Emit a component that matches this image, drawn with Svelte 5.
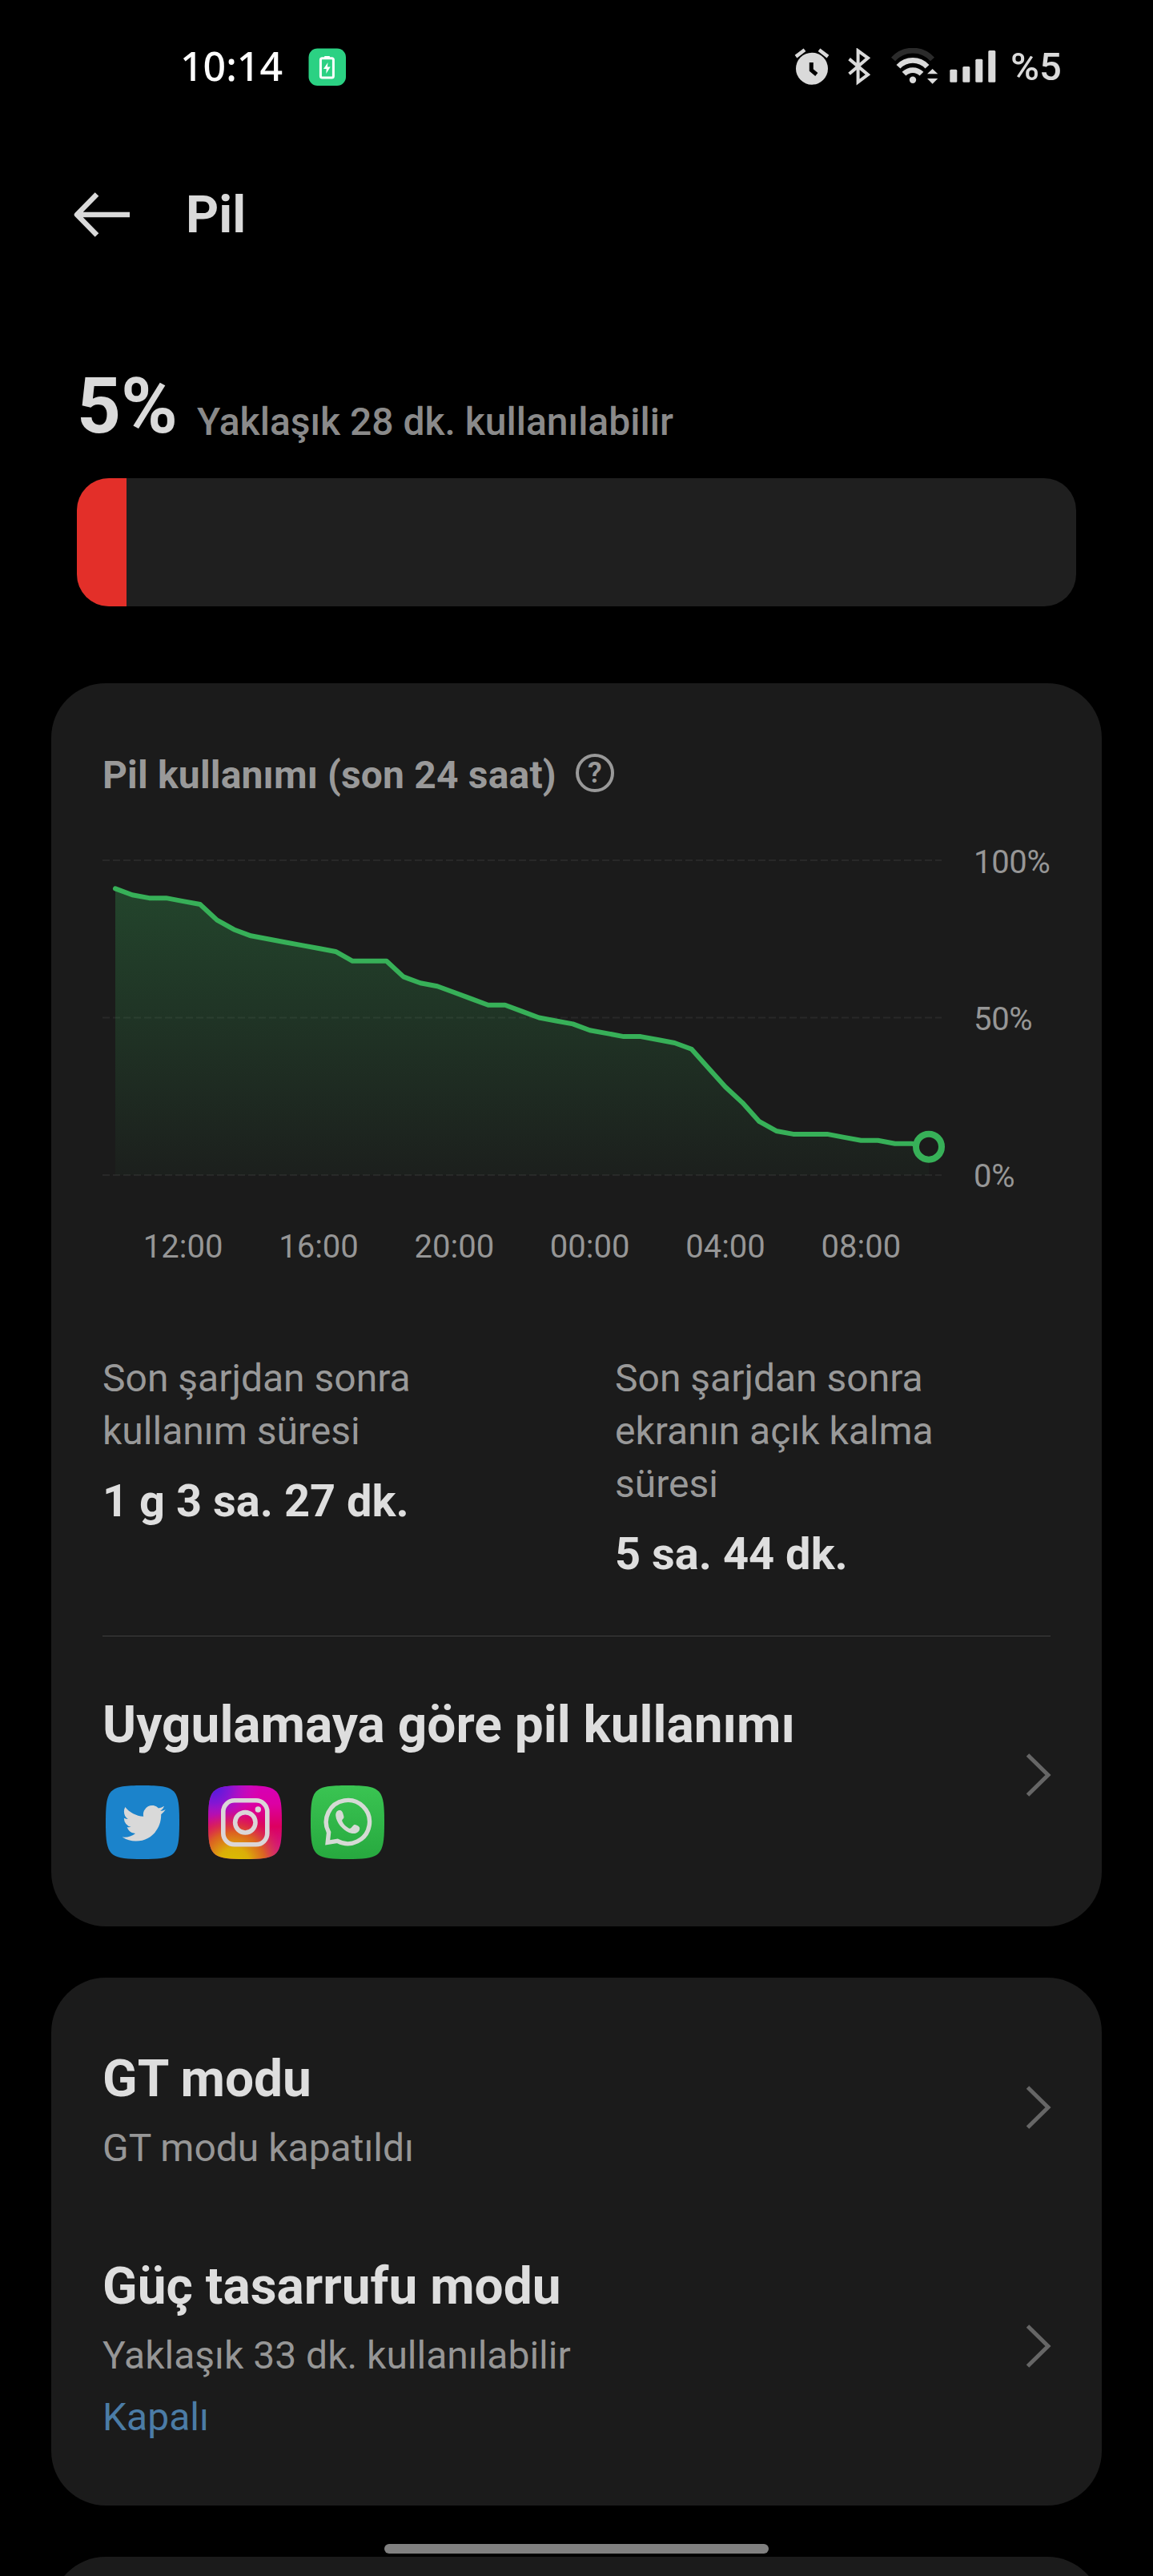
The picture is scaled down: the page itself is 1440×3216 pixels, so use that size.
<script>
    const battery = 5;

    // one reading every half hour, oldest first
    const history = [
        91, 89, 88, 88, 87, 86, 81, 78, 76, 75, 74, 73, 72, 71, 68, 68, 68,
        63, 61, 60, 58, 56, 54, 54, 52, 50, 49, 48, 46, 45, 44, 44, 43, 42,
        40, 34, 28, 23, 17, 14, 13, 13, 13, 12, 11, 11, 10, 10, 9,
    ];
    const hours = ["12:00", "16:00", "20:00", "00:00", "04:00", "08:00"];
    const levels = ["100%", "50%", "0%"];

    const left = 16;
    const top = 22;
    const plotWidth = 1016;
    const plotHeight = 393;

    const points = history.map((value, i) => [
        left + (i * plotWidth) / (history.length - 1),
        top + plotHeight * (1 - value / 100),
    ]);
    const line = points.map((p) => p.join(",")).join(" ");
    const area = `${left},${top + plotHeight} ${line} ${left + plotWidth},${top + plotHeight}`;
    const last = points[points.length - 1];

    const stats = [
        { label: "Son şarjdan sonra kullanım süresi", value: "1 g 3 sa. 27 dk." },
        { label: "Son şarjdan sonra ekranın açık kalma süresi", value: "5 sa. 44 dk." },
    ];

    const modes = [
        { title: "GT modu", note: "GT modu kapatıldı" },
        {
            title: "Güç tasarrufu modu",
            note: "Yaklaşık 33 dk. kullanılabilir",
            state: "Kapalı",
        },
    ];

    const squircle = "M0 46C0 4 4 0 46 0S92 4 92 46 88 92 46 92 0 88 0 46Z";
</script>

{#snippet chevron()}
    <svg class="chevron" width="34" height="56" viewBox="0 0 34 56">
        <path d="M4.500 3 L30 28 L4.500 53" />
    </svg>
{/snippet}

<div class="screen">
    <div class="status">
        <div class="status-left">
            <span class="clock">10:14</span>
            <svg width="48" height="48" viewBox="0 0 48 48">
                <rect x="0.500" y="0.500" width="46.500" height="46.500" rx="11" fill="#2bd183" />
                <path d="M20.500 10.500h6v2h-6z" fill="#fff" stroke="#fff" stroke-linejoin="round" />
                <rect x="15.400" y="12.700" width="16" height="24.300" rx="2" fill="none" stroke="#fff" stroke-width="3" />
                <path d="M24.500 18l-5.500 8h3.700l-.4 6 5.400-8.500h-3.800z" fill="#fff" />
            </svg>
        </div>
        <div class="status-right">
            <svg width="44" height="48" viewBox="0 0 44 48">
                <circle cx="22" cy="25.700" r="20" fill="#dadada" />
                <path d="M21.300 18v9.500l6.500 5.500" fill="none" stroke="#000" stroke-width="5" />
                <path d="M2 10.600L13 2.200M31 2.200L42 10.600" stroke="#dadada" stroke-width="4.500" />
            </svg>
            <svg class="bluetooth" width="30" height="48" viewBox="0 0 30 48">
                <path d="M2.600 13.600L26 33.200 13.600 42.500V3.300L26 12.300 2.600 32.300" fill="none" stroke="#dadada" stroke-width="4" />
            </svg>
            <svg class="wifi" width="60" height="48" viewBox="0 0 60 48" fill="none" stroke-width="6.800">
                <path d="M3.500 14A33 33 0 0 1 52.500 14" stroke="#2b2b2b" />
                <path d="M10 23.300A24.500 24.500 0 0 1 46 23.300" stroke="#dadada" />
                <path d="M17 32.200A15.500 15.500 0 0 1 39 32.200" stroke="#dadada" />
                <circle cx="28" cy="39.700" r="4.200" fill="#dadada" />
                <path d="M46 32.300L52.600 26l6.700 6.300zM46 38h13.300l-6.700 6.700z" fill="#dadada" />
            </svg>
            <svg class="signal" width="58" height="48" viewBox="0 0 58 48" fill="#dadada">
                <rect x="0.300" y="26.700" width="9" height="16" rx="1.500" />
                <rect x="16.300" y="23" width="9" height="19.700" rx="1.500" />
                <rect x="32.300" y="13.700" width="9" height="29" rx="1.500" />
                <rect x="48.300" y="3" width="9" height="39.700" rx="1.500" />
            </svg>
            <span class="charge">%{battery}</span>
        </div>
    </div>

    <header>
        <svg width="72" height="58" viewBox="0 0 72 58">
            <path d="M30 3.500L5 29l25 25.500M6 29h65" fill="none" stroke="#dadada" stroke-width="6.500" stroke-linejoin="round" />
        </svg>
        <h1>Pil</h1>
    </header>

    <section class="summary">
        <div class="remaining">
            <strong>{battery}%</strong>
            <span>Yaklaşık 28 dk. kullanılabilir</span>
        </div>
        <div class="meter">
            <div class="meter-fill" style="width: {battery}%"></div>
        </div>
    </section>

    <section class="card usage">
        <div class="usage-title">
            <h2>Pil kullanımı (son 24 saat)</h2>
            <div class="help">?</div>
        </div>

        <div class="chart">
            <svg width="1056" height="440" viewBox="0 0 1056 440">
                <defs>
                    <linearGradient id="fade" x1="0" y1="0" x2="0" y2="1">
                        <stop offset="0" stop-color="#37b058" stop-opacity="0.28" />
                        <stop offset="1" stop-color="#37b058" stop-opacity="0.03" />
                    </linearGradient>
                </defs>
                {#each [0, 0.5, 1] as step}
                    <line class="grid" x1="0" x2="1048" y1={top + plotHeight * step} y2={top + plotHeight * step} />
                {/each}
                <polygon points={area} fill="url(#fade)" />
                <polyline points={line} class="curve" />
                <circle cx={last[0]} cy={last[1]} r="16" class="now" />
            </svg>
            <div class="levels">
                {#each levels as level}
                    <span>{level}</span>
                {/each}
            </div>
        </div>
        <div class="hours">
            {#each hours as hour}
                <span>{hour}</span>
            {/each}
        </div>

        <div class="stats">
            {#each stats as stat}
                <div class="stat">
                    <p>{stat.label}</p>
                    <strong>{stat.value}</strong>
                </div>
            {/each}
        </div>

        <div class="row apps">
            <div>
                <h3>Uygulamaya göre pil kullanımı</h3>
                <div class="icons">
                    <svg width="92" height="92" viewBox="0 0 92 92">
                        <path d={squircle} fill="#1b83cb" />
                        <path
                            transform="translate(20.700 19.800) scale(2.250 2.290)"
                            fill="#d9d9d9"
                            d="M23.953 4.570a10 10 0 01-2.825.775 4.958 4.958 0 002.163-2.723c-.951.555-2.005.959-3.127 1.184a4.920 4.920 0 00-8.384 4.482C7.690 8.095 4.067 6.130 1.640 3.162a4.822 4.822 0 00-.666 2.475c0 1.710.870 3.213 2.188 4.096a4.904 4.904 0 01-2.228-.616v.060a4.923 4.923 0 003.946 4.827 4.996 4.996 0 01-2.212.085 4.936 4.936 0 004.604 3.417 9.867 9.867 0 01-6.102 2.105c-.390 0-.779-.023-1.170-.067a13.995 13.995 0 007.557 2.209c9.053 0 13.998-7.496 13.998-13.985 0-.210 0-.420-.015-.630A9.935 9.935 0 0024 4.590z"
                        />
                    </svg>
                    <svg width="92" height="92" viewBox="0 0 92 92">
                        <defs>
                            <linearGradient id="pink" x1="0" y1="0" x2="0" y2="1">
                                <stop offset="0" stop-color="#d600b6" />
                                <stop offset="0.250" stop-color="#dc00a4" />
                                <stop offset="0.560" stop-color="#dc0060" />
                                <stop offset="1" stop-color="#cc2496" />
                            </linearGradient>
                            <radialGradient id="violet" gradientUnits="userSpaceOnUse" cx="6" cy="2" r="58">
                                <stop offset="0" stop-color="#4a1ce0" />
                                <stop offset="0.350" stop-color="#7a18d8" stop-opacity="0.900" />
                                <stop offset="1" stop-color="#c81bc8" stop-opacity="0" />
                            </radialGradient>
                            <radialGradient id="sun" gradientUnits="userSpaceOnUse" cx="32" cy="98" r="66">
                                <stop offset="0" stop-color="#d9c000" />
                                <stop offset="0.300" stop-color="#dcae08" />
                                <stop offset="0.600" stop-color="#dc6a18" stop-opacity="0.900" />
                                <stop offset="1" stop-color="#dc2050" stop-opacity="0" />
                            </radialGradient>
                        </defs>
                        <path d={squircle} fill="url(#pink)" />
                        <path d={squircle} fill="url(#violet)" />
                        <path d={squircle} fill="url(#sun)" />
                        <g fill="none" stroke="#dbd6d8" stroke-width="5.600">
                            <rect x="18.800" y="18.800" width="55" height="55" rx="14" />
                            <circle cx="46.300" cy="46.300" r="12.700" />
                        </g>
                        <circle cx="62.300" cy="30" r="3.700" fill="#dbd6d8" />
                    </svg>
                    <svg width="92" height="92" viewBox="0 0 92 92">
                        <defs>
                            <linearGradient id="green" x1="0" y1="0" x2="0" y2="1">
                                <stop offset="0" stop-color="#3ac452" />
                                <stop offset="1" stop-color="#27a93f" />
                            </linearGradient>
                        </defs>
                        <path d={squircle} fill="url(#green)" />
                        <path d="M22.600 58.500A27.100 27.100 0 1 1 33.500 69.400L21.200 71.300Z" fill="none" stroke="#d5dad5" stroke-width="5.400" />
                        <path d="M35.500 31c-3 .3-4.500 3.500-4.200 7 .8 9.500 11 20.500 20.500 22 4.500.6 8.500-1.500 9.300-5 .5-2.600-.4-3.400-3-4.900-2.800-1.600-4-1.400-5.600.6l-2 2.400c-1 1-1.800.9-3.200.1-3.500-2-6.200-5-7.800-8.300-.5-1.200-.4-1.800.5-2.700 1.600-1.700 1.800-2.600 1-5-1.200-4.200-1.800-6.500-5.500-6.200z" fill="#d5dad5" />
                    </svg>
                </div>
            </div>
            {@render chevron()}
        </div>
    </section>

    <section class="card modes">
        {#each modes as mode}
            <div class="row">
                <div>
                    <h3>{mode.title}</h3>
                    <p>{mode.note}</p>
                    {#if mode.state}
                        <p class="state">{mode.state}</p>
                    {/if}
                </div>
                {@render chevron()}
            </div>
        {/each}
    </section>

    <section class="card next"></section>

    <div class="home"></div>
</div>

<style>
    :global(body) {
        background: #000;
    }

    .screen {
        position: relative;
        width: 1440px;
        height: 3216px;
        overflow: hidden;
        background: #000;
        color: #dedede;
        font-family: Roboto, sans-serif;
    }

    svg {
        display: block;
        flex: none;
    }

    h1,
    h2,
    h3,
    p {
        margin: 0;
    }

    .status {
        display: flex;
        align-items: center;
        justify-content: space-between;
        height: 168px;
        padding: 0 113px 0 225px;
        box-sizing: border-box;
    }
    .status-left,
    .status-right {
        display: flex;
        align-items: center;
    }
    .status-left {
        gap: 28px;
    }
    .clock {
        width: 132px;
        margin-top: -5px;
        color: #fff;
        font-family: "Noto Sans", sans-serif;
        font-size: 50px;
        font-weight: 500;
        line-height: 60px;
        white-space: nowrap;
    }
    .bluetooth {
        margin-left: 22px;
    }
    .wifi {
        margin-left: 24px;
    }
    .signal {
        margin: 0 18px 0 14px;
    }
    .charge {
        width: 65px;
        color: #dadada;
        font-size: 49px;
        font-weight: 500;
        line-height: 60px;
        white-space: nowrap;
    }

    header {
        display: flex;
        align-items: center;
        gap: 69px;
        height: 200px;
        padding-left: 91px;
    }
    h1 {
        padding-top: 2px;
        color: #dadada;
        font-size: 64px;
        font-weight: 700;
        line-height: 76px;
    }

    .summary {
        padding: 83px 96px 96px;
    }
    .remaining {
        display: flex;
        align-items: flex-end;
        gap: 24px;
    }
    .remaining strong {
        color: #dadada;
        font-size: 96px;
        font-weight: 700;
        line-height: 112px;
    }
    .remaining span {
        margin-bottom: 8px;
        color: #8a8a8a;
        font-size: 48px;
        font-weight: 500;
        line-height: 56px;
    }
    .meter {
        height: 160px;
        margin-top: 34px;
        overflow: hidden;
        border-radius: 40px;
        background: #1f1f1f;
    }
    .meter-fill {
        height: 100%;
        background: #e32f29;
    }

    .card {
        margin: 0 64px 64px;
        padding: 0 64px;
        border-radius: 68px;
        background: #1b1b1b;
    }

    .usage {
        padding-top: 87px;
        padding-bottom: 84px;
    }
    .usage-title {
        display: flex;
        align-items: center;
        gap: 24px;
        height: 56px;
    }
    h2 {
        color: #999;
        font-size: 48px;
        font-weight: 700;
        letter-spacing: 0.18px;
        line-height: 56px;
    }
    .help {
        width: 48px;
        height: 48px;
        margin-bottom: 6px;
        box-sizing: border-box;
        border: 4px solid #999;
        border-radius: 50%;
        color: #999;
        font-size: 36px;
        font-weight: 600;
        line-height: 41px;
        text-align: center;
    }

    .chart {
        display: flex;
        gap: 32px;
        margin-top: 56px;
    }
    .grid {
        stroke: #282828;
        stroke-width: 2;
        stroke-dasharray: 9 4;
    }
    .curve {
        fill: none;
        stroke: #37b058;
        stroke-width: 6;
        stroke-linecap: round;
        stroke-linejoin: round;
    }
    .now {
        fill: #1b1b1b;
        stroke: #37b058;
        stroke-width: 8;
    }
    .levels {
        display: flex;
        flex-direction: column;
        justify-content: space-between;
        margin: 1px 0 -1px;
        color: #969696;
        font-size: 40px;
        letter-spacing: -0.3px;
        line-height: 48px;
    }
    .hours {
        display: flex;
        width: 1016px;
        margin: 41px 0 0 16px;
    }
    .hours span {
        flex: 1;
        color: #969696;
        font-size: 40px;
        line-height: 48px;
        text-align: center;
    }

    .stats {
        display: grid;
        grid-template-columns: 640px 1fr;
        margin-top: 107px;
        padding-bottom: 69px;
        border-bottom: 1px solid #404040;
    }
    .stat p {
        max-width: 430px;
        color: #999;
        font-size: 48px;
        line-height: 66px;
    }
    .stat strong {
        display: block;
        margin-top: 21px;
        font-size: 56px;
        font-weight: 700;
        line-height: 66px;
    }

    .row {
        display: flex;
        align-items: center;
        justify-content: space-between;
    }
    .apps {
        margin-top: 73px;
    }
    h3 {
        font-size: 64px;
        font-weight: 700;
        line-height: 76px;
    }
    .icons {
        display: flex;
        gap: 36px;
        margin: 37px 0 0 4px;
    }
    .chevron {
        margin: 0 -1px 6px 0;
    }
    .chevron path {
        fill: none;
        stroke: #666;
        stroke-width: 5;
    }

    .modes {
        display: flex;
        flex-direction: column;
        gap: 107px;
        padding-top: 89px;
        padding-bottom: 82px;
    }
    .modes p {
        margin-top: 20px;
        color: #969696;
        font-size: 48px;
        line-height: 56px;
    }
    .modes .state {
        margin-top: 21px;
        color: #4b7ca6;
    }

    .next {
        height: 200px;
    }

    .home {
        position: absolute;
        left: 480px;
        bottom: 28px;
        width: 480px;
        height: 12px;
        border-radius: 6px;
        background: #808080;
    }
</style>
